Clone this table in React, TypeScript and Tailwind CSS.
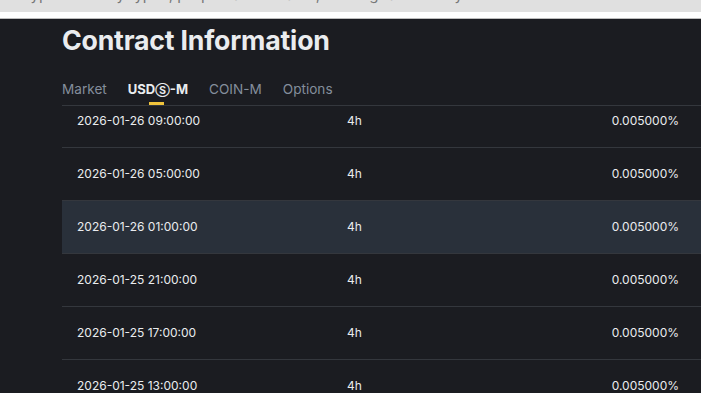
import React from "react";

const rows = [
  { t: "2026-01-26 09:00:00", hl: false },
  { t: "2026-01-26 05:00:00", hl: false },
  { t: "2026-01-26 01:00:00", hl: true },
  { t: "2026-01-25 21:00:00", hl: false },
  { t: "2026-01-25 17:00:00", hl: false },
  { t: "2026-01-25 13:00:00", hl: false },
];

export default function App() {
  return (
    <div className="w-[701px] h-[393px] overflow-hidden bg-[#1b1c21]" style={{ fontFamily: "Inter, 'Noto Sans', sans-serif" }}>
      <div className="h-[12px] bg-[#e0e0e0] overflow-hidden pl-[2px]">
        <div className="mt-[-14px] text-[15px] text-[#777] whitespace-nowrap leading-[18px]">
          ~ cryptocurrency types, perpetual contracts, funding rate history
        </div>
      </div>
      <div className="h-[6px] bg-white" />
      <div className="h-[1px] bg-[#bdbdbd]" />
      <div className="pl-[62px]">
        <h1 className="pt-[1px] text-[26.7px] font-bold text-[#eaecef] leading-[40px] tracking-[-0.2px]">Contract Information</h1>
        <div className="mt-[17px] flex items-end gap-[21px] border-b border-[#34373d] text-[13.6px] h-[29px]">
          <span className="text-[#848e9c] pb-[6px]">Market</span>
          <span className="relative text-[#eaecef] font-bold pb-[6px] text-[13px]">
            USD<span className="text-[10.5px]">Ⓢ</span>-M
            <span className="absolute left-[21px] bottom-[0px] w-[15px] h-[3px] bg-[#f0c33c]" />
          </span>
          <span className="text-[#848e9c] pb-[6px]">COIN-M</span>
          <span className="text-[#848e9c] pb-[6px]">Options</span>
        </div>
        <div className="h-[300px] overflow-hidden">
          <div className="mt-[-11px]">
            {rows.map((r, i) => (
              <div
                key={i}
                className={`grid grid-cols-[270px_1fr_auto] items-center h-[53px] pl-[15px] pr-[22px] text-[12px] text-[#eaecef] border-b border-[#34373d] ${r.hl ? "bg-[#29303a]" : ""}`}
              >
                <span>{r.t}</span>
                <span>4h</span>
                <span>0.005000%</span>
              </div>
            ))}
          </div>
        </div>
      </div>
    </div>
  );
}
